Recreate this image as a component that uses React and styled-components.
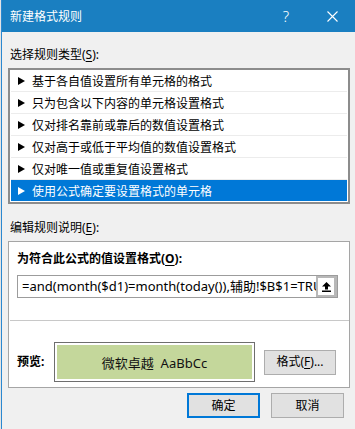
import React from 'react';
import styled, { createGlobalStyle } from 'styled-components';

const FONT = '"Noto Sans", "Noto Sans CJK SC", sans-serif';
const CJK = '"Noto Sans CJK SC", "Noto Sans", sans-serif';

const Global = createGlobalStyle`
  html, body { margin: 0; padding: 0; background: #f0f0f0; }
  body { font-family: ${FONT}; }
  * { box-sizing: border-box; }
`;

const Screen = styled.div`
  width: 355px;
  height: 429px;
  overflow: hidden;
  background: #e4e4e4;
  padding-left: 1px;
`;

const Window = styled.div`
  width: 355px;
  height: 429px;
  border-left: 1px solid #2b88d0;
  border-right: 1px solid #2b88d0;
  background: #f0f0f0;
  display: flex;
  flex-direction: column;
`;

const TitleBar = styled.div`
  height: 32px;
  flex: none;
  background: #1a7fc1;
  display: flex;
  align-items: center;
  color: #fff;
`;

const TitleText = styled.div`
  flex: 1;
  padding-left: 8px;
  font-family: ${CJK};
  font-size: 12px;
  line-height: 16px;
`;

const CaptionButton = styled.div`
  width: 46px;
  height: 32px;
  display: flex;
  align-items: center;
  justify-content: center;
  font-family: "Noto Sans", sans-serif;
  font-size: 15px;
  font-weight: 300;
  color: #fff;
`;

const Body = styled.div`
  padding: 0 5px 0 6px;
  display: flex;
  flex-direction: column;
`;

const Label = styled.div`
  margin-top: ${(p) => p.$top}px;
  padding-left: 2px;
  font-size: 12px;
  line-height: 16px;
  color: #000;
  u { text-underline-offset: 2px; }
`;

const ListBox = styled.div`
  margin-top: 5px;
  width: 342px;
  border: 2px solid #8c8c8c;
  background: #fff;
  padding: 0 1px;
`;

const Row = styled.div`
  height: 22px;
  display: flex;
  align-items: center;
  gap: 7px;
  padding: 1px 0 0 7px;
  border-bottom: 1px solid ${(p) => (p.$selected ? '#fff' : '#ececec')};
  background: ${(p) => (p.$selected ? '#0078d7' : '#fff')};
  color: ${(p) => (p.$selected ? '#fff' : '#000')};
  font-family: ${CJK};
  font-size: 12px;
  line-height: 16px;
  &:last-child { border-bottom-color: #fff; }
`;

const Panel = styled.div`
  margin-top: 5px;
  width: 342px;
  border: 1px solid #a5a5a5;
  background: #fff;
  padding: 9px 0 5px 0;
  display: flex;
  flex-direction: column;
`;

const PanelLabel = styled.div`
  padding-left: 8px;
  font-size: 12px;
  line-height: 16px;
  font-weight: bold;
  color: #000;
  u { text-underline-offset: 2px; }
`;

const FormulaBox = styled.div`
  margin: 8px 0 0 8px;
  width: 321px;
  height: 23px;
  border: 1px solid #9c9c9c;
  display: flex;
`;

const FormulaText = styled.div`
  flex: 1;
  overflow: hidden;
  white-space: nowrap;
  padding-left: 4px;
  font-size: 13px;
  line-height: 21px;
  color: #000;
`;

const RefButton = styled.div`
  width: 21px;
  flex: none;
  background: #b8b8b8;
  padding: 2px 3px 2px 2px;
  display: flex;
`;

const RefInner = styled.div`
  flex: 1;
  background: #fff;
  display: flex;
  align-items: center;
  justify-content: center;
`;

const Separator = styled.div`
  margin: 22px 0 0 1px;
  height: 1px;
  background: #c8c8c8;
`;

const PreviewRow = styled.div`
  margin-top: 21px;
  height: 40px;
  display: flex;
  align-items: center;
`;

const PreviewLabel = styled.div`
  width: 45px;
  padding-left: 8px;
  font-size: 12px;
  font-weight: bold;
  line-height: 16px;
  color: #000;
`;

const PreviewBox = styled.div`
  width: 201px;
  height: 40px;
  border: 1px solid #6e6e6e;
  background: #fff;
  padding: 2px;
  display: flex;
`;

const PreviewFill = styled.div`
  flex: 1;
  background: #c4d79b;
  display: flex;
  align-items: center;
  justify-content: center;
  font-size: 13px;
  color: #111;
  white-space: pre;
`;

const Button = styled.div`
  width: ${(p) => p.$w}px;
  height: 25px;
  margin-left: ${(p) => p.$ml || 0}px;
  background: #e1e1e1;
  border: ${(p) => (p.$default ? '2px solid #0078d7' : '1px solid #adadad')};
  display: flex;
  align-items: center;
  justify-content: center;
  font-size: 12px;
  line-height: 16px;
  color: #000;
  u { text-underline-offset: 2px; }
`;

const ButtonRow = styled.div`
  margin-top: 5px;
  padding-right: 6px;
  display: flex;
  justify-content: flex-end;
  gap: 11px;
`;

const Triangle = ({ color }) => (
  <svg width="7" height="8" viewBox="0 0 7 8" style={{ flex: 'none' }}>
    <polygon points="0,0 7,4 0,8" fill={color} />
  </svg>
);

const CloseIcon = () => (
  <svg width="11" height="11" viewBox="0 0 11 11">
    <path d="M0.5 0.5 L10.5 10.5 M10.5 0.5 L0.5 10.5" stroke="#fff" strokeWidth="1.1" />
  </svg>
);

const UpArrow = () => (
  <svg width="9" height="10" viewBox="0 0 9 10">
    <polygon points="4.5,0 9,4.5 6,4.5 6,7.5 3,7.5 3,4.5 0,4.5" fill="#000" />
    <rect x="0" y="8.5" width="9" height="1.5" fill="#000" />
  </svg>
);

const rules = [
  '基于各自值设置所有单元格的格式',
  '只为包含以下内容的单元格设置格式',
  '仅对排名靠前或靠后的数值设置格式',
  '仅对高于或低于平均值的数值设置格式',
  '仅对唯一值或重复值设置格式',
  '使用公式确定要设置格式的单元格',
];

export default function App() {
  return (
    <>
      <Global />
      <Screen>
        <Window>
          <TitleBar>
            <TitleText>新建格式规则</TitleText>
            <CaptionButton>?</CaptionButton>
            <CaptionButton><CloseIcon /></CaptionButton>
          </TitleBar>
          <Body>
            <Label $top={15}>选择规则类型(<u>S</u>):</Label>
            <ListBox>
              {rules.map((r, i) => {
                const sel = i === rules.length - 1;
                return (
                  <Row key={r} $selected={sel}>
                    <Triangle color={sel ? '#fff' : '#000'} />
                    <span>{r}</span>
                  </Row>
                );
              })}
            </ListBox>
            <Label $top={16}>编辑规则说明(<u>E</u>):</Label>
            <Panel>
              <PanelLabel>为符合此公式的值设置格式(<u>O</u>):</PanelLabel>
              <FormulaBox>
                <FormulaText>=and(month($d1)=month(today()),辅助!$B$1=TRUE)</FormulaText>
                <RefButton>
                  <RefInner><UpArrow /></RefInner>
                </RefButton>
              </FormulaBox>
              <Separator />
              <PreviewRow>
                <PreviewLabel>预览:</PreviewLabel>
                <PreviewBox>
                  <PreviewFill>微软卓越  AaBbCc</PreviewFill>
                </PreviewBox>
                <Button $w={72} $ml={9}>格式(<u>F</u>)...</Button>
              </PreviewRow>
            </Panel>
            <ButtonRow>
              <Button $w={73} $default>确定</Button>
              <Button $w={73}>取消</Button>
            </ButtonRow>
          </Body>
        </Window>
      </Screen>
    </>
  );
}
